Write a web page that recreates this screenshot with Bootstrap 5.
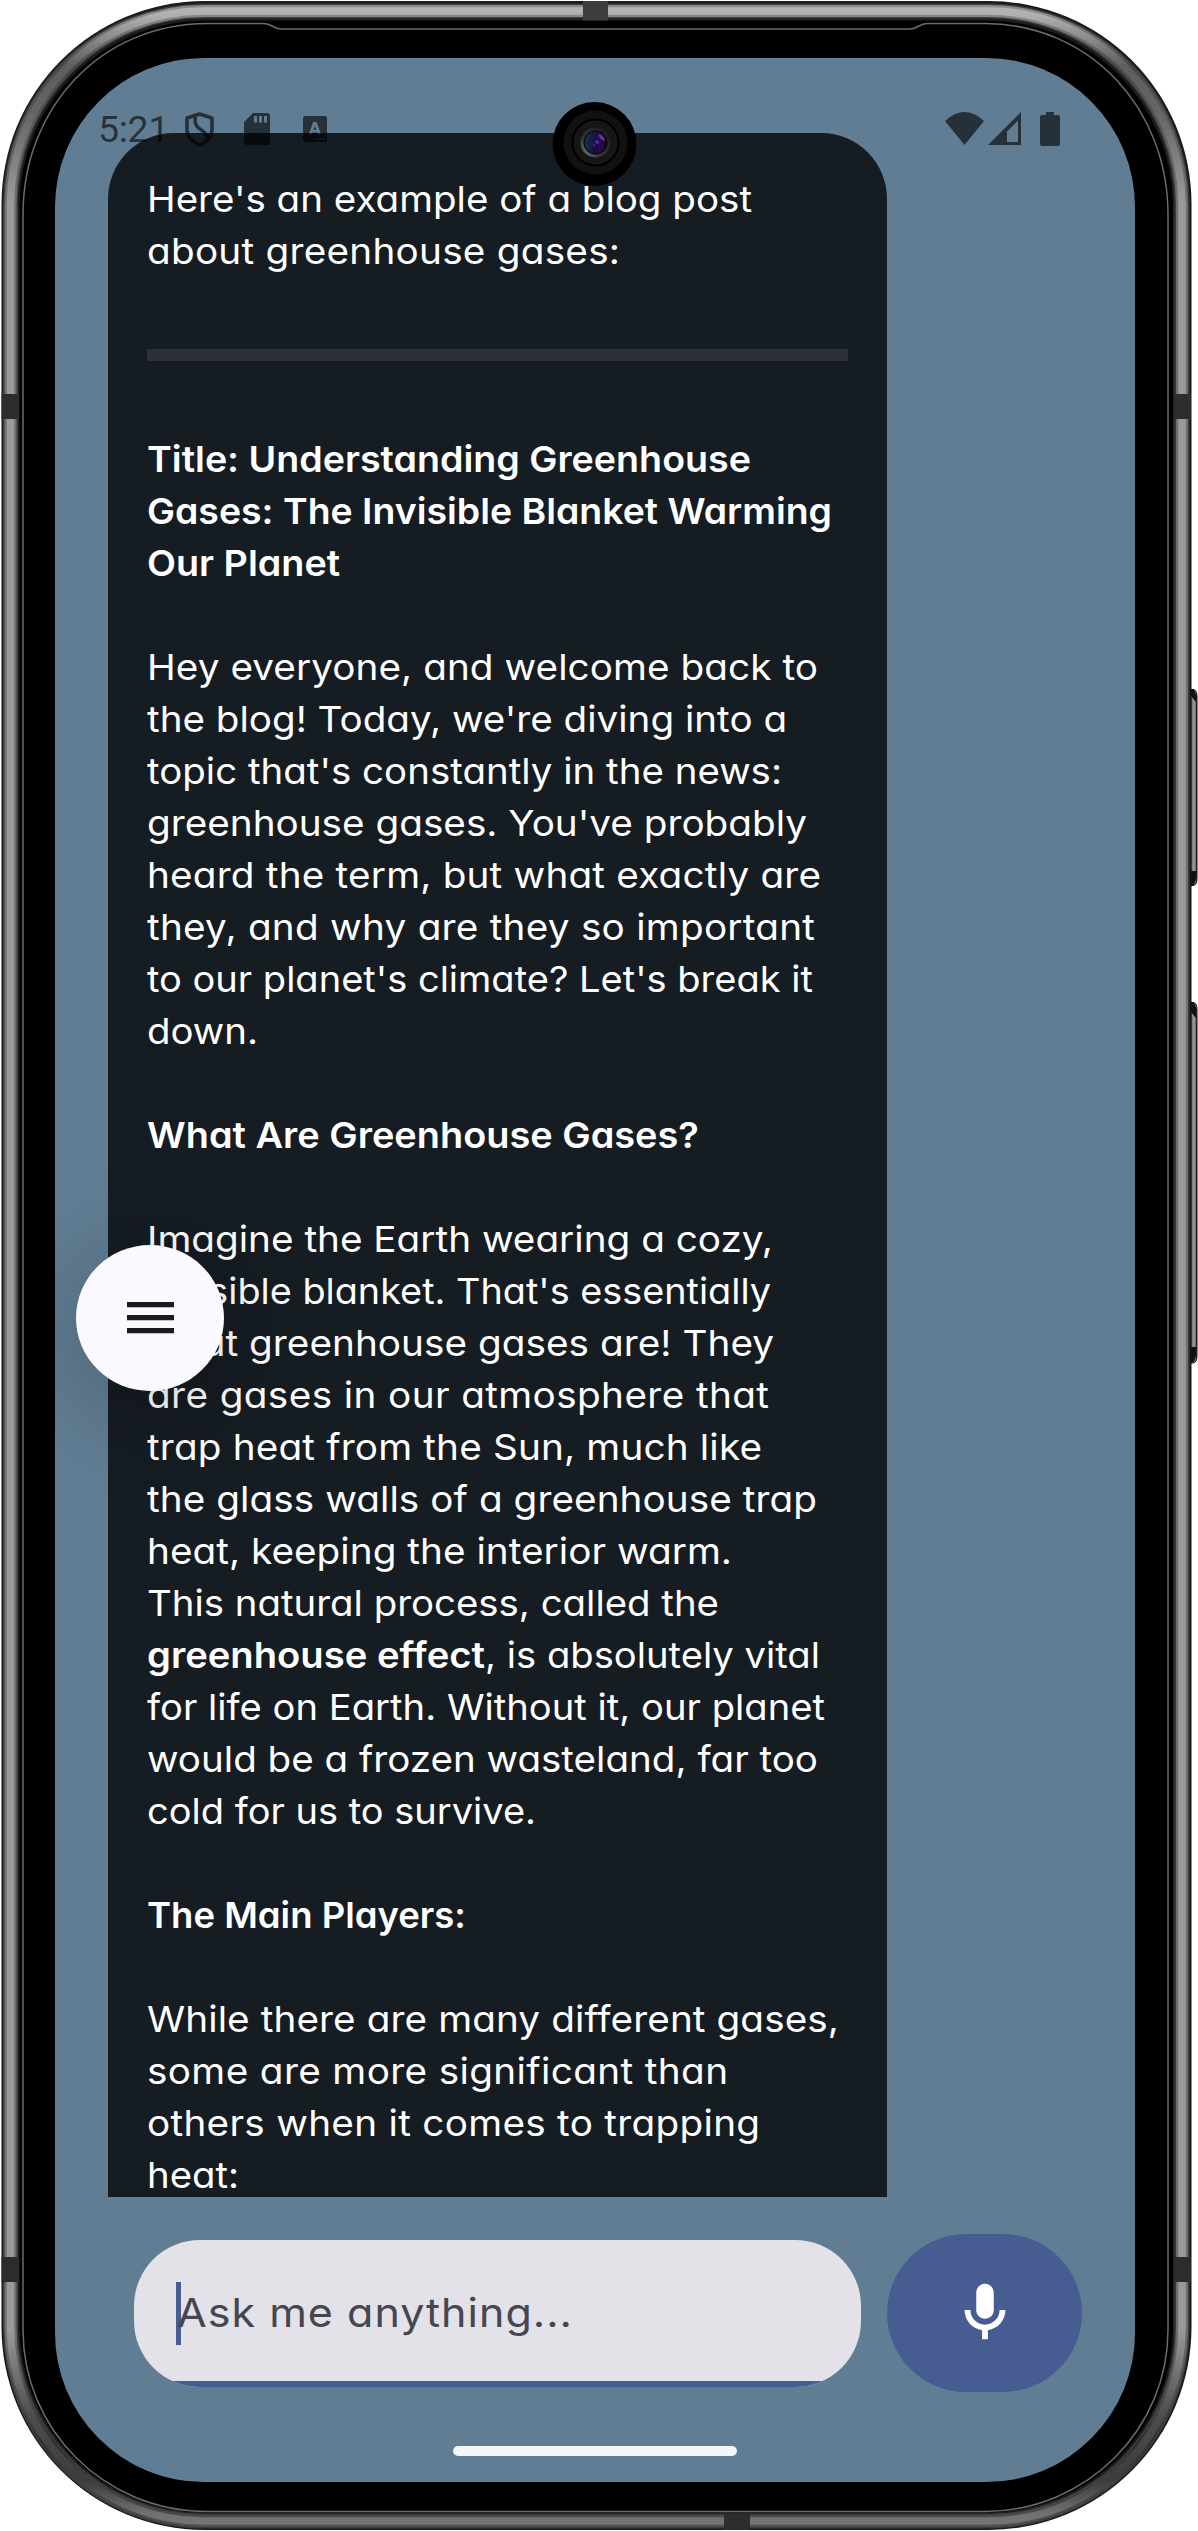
<!DOCTYPE html>
<html lang="en">
<head>
<meta charset="utf-8">
<meta name="viewport" content="width=device-width, initial-scale=1">
<title>Chat assistant</title>
<link href="https://cdn.jsdelivr.net/npm/bootstrap@5.3.0/dist/css/bootstrap.min.css" rel="stylesheet">
<style>
body{background:#fff;overflow:hidden}
.device{width:1198px;height:2531px;padding:58px 63px 49px 55px}
.shell{z-index:0}
.screen{width:1080px;height:2424px;border-radius:149px;background:#617d93;padding-top:75px;z-index:1}
.status{top:54px;left:43px;right:75px;height:34px;color:rgba(0,0,0,.61);z-index:3}
.status svg{flex:none}
.clock{font:400 37.5px/34px Roboto,sans-serif;width:87px;letter-spacing:-.3px}
.sdcard{margin-left:29px;margin-right:33px}
.wifi{margin-left:auto}
.cell{margin-left:4px}
.batt{margin-left:19px}
.bubble{width:779px;height:2064px;margin-left:53px;padding:40px 38px 0 39px;border-radius:66px 66px 0 0;background:#151c22;color:#fff;
  font-family:Inter,sans-serif;font-size:36px;line-height:52px;font-feature-settings:"cv11";z-index:1}
.bubble p{margin:0 0 52px;white-space:nowrap}
.bubble p.title-line,.bubble b{font-weight:600}
.bubble p>span{display:block;width:max-content;transform-origin:0 50%}
.rule{height:12px;background:#2e3039;margin:72px 1px 72px 0}
.fab{left:21px;top:1187px;width:148px;height:146px;background:#faf9ff;box-shadow:0 16px 90px 10px rgba(0,0,0,.2);z-index:4}
.composer{height:158px;margin:37px 53px 0 79px;z-index:2}
.ask{width:727px;height:147px;border-radius:66px;background:#e2e2e8;padding:0 42px 0 43px;
  font-family:Inter,sans-serif;font-feature-settings:"cv11";font-size:40px;color:#45464f;margin-right:26px}
.ask::after{content:"";position:absolute;left:0;right:0;bottom:0;height:6px;background:#475d92}
.caret{position:absolute;left:42px;top:42px;width:5px;height:63px;background:#475d92}
.hint{position:relative;display:block;white-space:nowrap;transform-origin:0 50%}
.mic{width:195px;height:158px;border-radius:79px;background:#475d92;border:0}
.handle{width:284px;height:10px;border-radius:5px;background:#f4f5f8;margin:54px auto 0}
.cam{left:497px;top:43px;z-index:5}
</style>
<script src="https://cdn.jsdelivr.net/npm/bootstrap@5.3.0/dist/js/bootstrap.bundle.min.js"></script>
</head>
<body>
<div class="device position-relative">
  <!-- phone body: metal band, bezel line, antenna gaps, side keys -->
  <svg class="shell position-absolute top-0 start-0" width="1198" height="2531" viewBox="0 0 1198 2531" fill="none">
    <defs>
      <linearGradient id="hi" gradientUnits="userSpaceOnUse" x1="0" y1="0" x2="0" y2="2531">
        <stop offset="0" stop-color="#b8b8b8"/><stop offset=".006" stop-color="#b0b0b0"/><stop offset=".026" stop-color="#5e5e5e"/><stop offset=".045" stop-color="#666"/><stop offset=".08" stop-color="#9a9a9a"/>
        <stop offset=".92" stop-color="#9a9a9a"/><stop offset=".955" stop-color="#4c4c4c"/><stop offset=".98" stop-color="#3c3c3c"/><stop offset=".993" stop-color="#707070"/><stop offset="1" stop-color="#777"/>
      </linearGradient>
      <linearGradient id="mid" gradientUnits="userSpaceOnUse" x1="0" y1="0" x2="0" y2="2531">
        <stop offset="0" stop-color="#8c8c8c"/><stop offset=".006" stop-color="#888"/><stop offset=".026" stop-color="#484848"/><stop offset=".08" stop-color="#707070"/>
        <stop offset=".92" stop-color="#707070"/><stop offset=".965" stop-color="#303030"/><stop offset="1" stop-color="#505050"/>
      </linearGradient>
      <linearGradient id="key" x1="0" x2="1" y1="0" y2="0"><stop offset="0" stop-color="#555"/><stop offset=".4" stop-color="#999"/><stop offset=".7" stop-color="#888"/><stop offset="1" stop-color="#111"/></linearGradient>
    </defs>
    <rect x="1.5" y="1" width="1190" height="2529" rx="203" fill="#1a1a1a"/>
    <rect x="10.5" y="11" width="1171.5" height="2510" rx="193" stroke="#3c3c3c" stroke-width="15"/>
    <rect x="10.5" y="11" width="1171.5" height="2510" rx="193" stroke="url(#mid)" stroke-width="12"/>
    <rect x="10.5" y="11" width="1171.5" height="2510" rx="193" stroke="url(#hi)" stroke-width="7.5"/>
    <rect x="19" y="20" width="1154.500" height="2493" rx="186" fill="#000" stroke="#222" stroke-width="1"/>
    <path d="M23 215C23 108 100 24 207 23.500H264C272 23.500 273 29 281 29H910C918 29 919 23.500 927 23.500H985C1090 24 1168 108 1168 215V2330C1168 2428 1088 2511 985 2511.500H207C102 2511 23 2428 23 2330Z" stroke="#6b6b6b" stroke-width="1.500"/>
    <g fill="#2c2c2c">
      <rect x="583" y="1" width="25" height="19.500" fill="#3d3d3d"/><rect x="724" y="2514" width="26" height="16"/>
      <rect x="1.500" y="394" width="17.500" height="25"/><rect x="1174" y="394" width="17" height="25"/>
      <rect x="1.500" y="2257" width="17.500" height="25"/><rect x="1174" y="2257" width="17" height="25"/>
    </g>
    <g fill="url(#key)" stroke="#111" stroke-width="1"><path d="M1191 689.500H1193Q1197 689.500 1197 697V878Q1197 885.500 1193 885.500H1191Z"/><path d="M1191 1002.500H1193Q1197 1002.500 1197 1010V1355Q1197 1363 1193 1363H1191Z"/></g>
    <path d="M1191 689h3l2 6v7l-5-6zM1191 871h5v8l-2 6h-3zM1191 1002h3l2 6v10l-5-6zM1191 1347h5v9l-2 6h-3z" fill="#111"/>
  </svg>

  <main class="screen position-relative overflow-hidden d-flex flex-column">
    <div class="status position-absolute d-flex align-items-start">
      <span class="clock">5:21</span>
      <svg width="30" height="35" viewBox="0 0 30 35" fill="none" stroke="currentColor" stroke-width="3.6" stroke-linejoin="round"><path d="M14.500 2L27 6V17C27 25 22 30 14.500 33C7 30 2 25 2 17V6ZM10.500 4.500C8.500 13 13 16 17.500 19C21.500 22 23 25 21.500 28"/></svg>
      <svg class="sdcard" width="26" height="34" viewBox="0 0 26 34"><path fill="currentColor" fill-rule="evenodd" d="M9 1H23Q26 1 26 4V30Q26 33 23 33H3Q0 33 0 30V10ZM10 4V10.500H13V4ZM15 4V10.500H18V4ZM20 4V10.500H23V4Z"/></svg>
      <svg width="24" height="34" viewBox="0 0 24 34"><path fill="currentColor" fill-rule="evenodd" d="M2 4H22Q24 4 24 6V28Q24 30 22 30H2Q0 30 0 28V6Q0 4 2 4ZM10.200 10L5.500 23H8.700L9.600 20.500H14.200L15.100 23H18.300L13.600 10ZM11.900 13.500L13.300 18H10.500ZM13 26V28H15V26ZM16.500 26V28H18.500V26ZM20 26V28H22V26Z"/></svg>
      <svg class="wifi" width="39" height="34" viewBox="0 0 39 34"><path fill="currentColor" d="M0 9Q19.500-9 39 9L19.500 33Z"/></svg>
      <svg class="cell" width="33" height="34" viewBox="0 0 33 34"><path fill="currentColor" fill-rule="evenodd" d="M33 0V33H0ZM30 8.500L19 19.500V30H30Z"/></svg>
      <svg class="batt" width="20" height="34" viewBox="0 0 20 34"><path fill="currentColor" d="M6 0H14V3H18Q20 3 20 5V32Q20 34 18 34H2Q0 34 0 32V5Q0 3 2 3H6Z"/></svg>
    </div>

    <section class="bubble position-relative">
      <p class="mb-0"><span data-w="605">Here's an example of a blog post</span><span data-w="473">about greenhouse gases:</span></p>
      <div class="rule"></div>
      <p class="title-line"><span data-w="604">Title: Understanding Greenhouse</span><span data-w="685">Gases: The Invisible Blanket Warming</span><span data-w="193">Our Planet</span></p>
      <p><span data-w="671">Hey everyone, and welcome back to</span><span data-w="640">the blog! Today, we're diving into a</span><span data-w="635">topic that's constantly in the news:</span><span data-w="660">greenhouse gases. You've probably</span><span data-w="674">heard the term, but what exactly are</span><span data-w="668">they, and why are they so important</span><span data-w="666">to our planet's climate? Let's break it</span><span data-w="111">down.</span></p>
      <p class="title-line"><span data-w="552">What Are Greenhouse Gases?</span></p>
      <p><span data-w="626">Imagine the Earth wearing a cozy,</span><span data-w="624">invisible blanket. That's essentially</span><span data-w="627">what greenhouse gases are! They</span><span data-w="622">are gases in our atmosphere that</span><span data-w="615">trap heat from the Sun, much like</span><span data-w="670">the glass walls of a greenhouse trap</span><span data-w="585">heat, keeping the interior warm.</span><span data-w="572">This natural process, called the</span><span data-w="673"><b>greenhouse effect</b>, is absolutely vital</span><span data-w="678">for life on Earth. Without it, our planet</span><span data-w="671">would be a frozen wasteland, far too</span><span data-w="389">cold for us to survive.</span></p>
      <p class="title-line"><span data-w="319">The Main Players:</span></p>
      <p><span data-w="692">While there are many different gases,</span><span data-w="581">some are more significant than</span><span data-w="613">others when it comes to trapping</span><span data-w="92">heat:</span></p>
    </section>

    <button class="fab btn rounded-circle position-absolute border-0 p-0 d-flex align-items-center justify-content-center" aria-label="Menu">
      <svg width="47" height="32" viewBox="0 0 47 32" fill="#1a1b21"><path d="M0 0H47V5.300H0ZM0 13H47V18.300H0ZM0 26H47V31.300H0Z"/></svg>
    </button>

    <div class="composer position-relative d-flex align-items-center">
      <div class="ask position-relative overflow-hidden d-flex align-items-center">
        <span class="caret"></span><span class="hint" data-w="395">Ask me anything...</span>
      </div>
      <button class="mic btn p-0 d-flex align-items-center justify-content-center" aria-label="Voice input">
        <svg width="70" height="70" viewBox="0 0 24 24" fill="#fff"><path d="M12 14c1.660 0 3-1.340 3-3V5c0-1.660-1.340-3-3-3S9 3.340 9 5v6c0 1.660 1.340 3 3 3zM17 11c0 2.760-2.240 5-5 5s-5-2.240-5-5H5c0 3.530 2.610 6.430 6 6.920V21h2v-3.080c3.390-.49 6-3.390 6-6.920z"/></svg>
      </button>
    </div>
    <div class="handle"></div>

    <svg class="cam position-absolute" width="86" height="86" viewBox="0 0 86 86">
      <defs>
        <linearGradient id="ring" x1="0" y1="1" x2="1" y2="0"><stop offset="0" stop-color="#888"/><stop offset=".35" stop-color="#333"/><stop offset="1" stop-color="#161616"/></linearGradient>
        <linearGradient id="lens" x1="0" y1=".3" x2="1" y2=".4"><stop offset="0" stop-color="#1c3440"/><stop offset=".5" stop-color="#17104a"/><stop offset=".8" stop-color="#2b0a49"/><stop offset="1" stop-color="#120318"/></linearGradient>
      </defs>
      <circle cx="42.500" cy="43" r="42"/><circle cx="43.500" cy="41.500" r="32" fill="#111"/><circle cx="43.500" cy="41.500" r="23" fill="#161616" stroke="#000" stroke-width="2"/>
      <circle cx="43.500" cy="41.500" r="15" fill="url(#ring)"/><circle cx="43.500" cy="41.500" r="11.500" fill="url(#lens)" stroke="#050505"/>
      <path d="M46 33q6 1 7 7q-5-1-7-7z" fill="#8b4a9a" opacity=".7"/><circle cx="45" cy="41" r="1.800" fill="#4a34d8"/><circle cx="42" cy="44" r="1.100" fill="#3a2bc0"/>
    </svg>
  </main>
</div>
<script>
// widen the letterforms a little, then track every line to its measured width
document.fonts.ready.then(function(){
  document.querySelectorAll('[data-w]').forEach(function(el){
    var want=+el.dataset.w, have=el.getBoundingClientRect().width;
    var wide=Math.min(1.075, want/have);
    el.style.transform='scaleX('+wide.toFixed(4)+')';
    el.style.letterSpacing=((want/wide-have)/(el.textContent.length-1)).toFixed(3)+'px';
  });
});
</script>
</body>
</html>
